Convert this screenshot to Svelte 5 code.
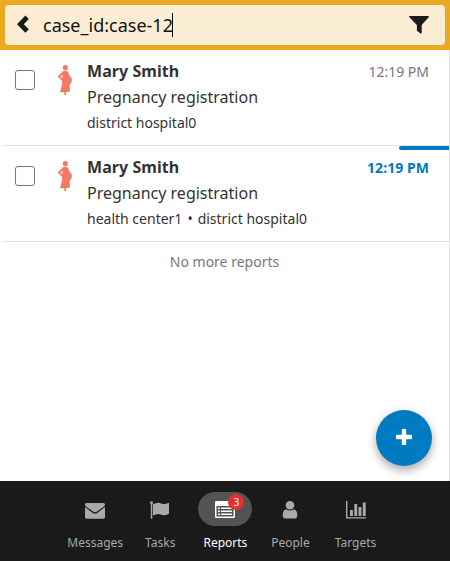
<script>
  const reports = [
    { name: 'Mary Smith', title: 'Pregnancy registration', lineage: ['district hospital0'], time: '12:19 PM', unread: false },
    { name: 'Mary Smith', title: 'Pregnancy registration', lineage: ['health center1', 'district hospital0'], time: '12:19 PM', unread: true }
  ];
  const tabs = [
    { id: 'messages', label: 'Messages' },
    { id: 'tasks', label: 'Tasks' },
    { id: 'reports', label: 'Reports', badge: 3 },
    { id: 'people', label: 'People' },
    { id: 'targets', label: 'Targets' }
  ];
  const active = 'reports';
</script>

<div class="app">
  <header>
    <div class="search">
      <svg class="back" width="12" height="19" viewBox="0 0 12 19"><path d="M0 9.200 8.400 .5 11.800 3.900 6.800 9.200l5 5.100-3.400 3.500z" fill="#1a1a1a" /></svg>
      <span class="query">case_id:case-12</span><i class="caret"></i>
      <svg class="filter" width="20" height="18" viewBox="0 0 20 18"><path d="M.8 0h18.400q1.100 0 .7 1.100L12.700 9v7.700q-.1 1.100-1.100.7L7.900 14.800V9L.1 1.100Q-.1 0 .8 0z" fill="#1a1a1a" /></svg>
    </div>
  </header>

  <main>
    {#each reports as report}
      <article class:unread={report.unread}>
        <span class="check"></span>
        <svg class="person" width="14" height="30" viewBox="0 0 14 30" fill="#f47b63">
          <circle cx="7.300" cy="2.700" r="2.600" />
          <path fill-rule="evenodd" d="M4.800 6.300Q7 5.400 9.300 6.300q1.300 1 1.800 3.700 2.800 2.300 2.800 5.600-.1 2.400-2.200 4.200L12 26q-1.400 1.200-4 1.200V30H6.300v-2.800H2Q3.100 22.500 4.300 18.800L3.900 15.600.5 12.500Q-.2 11.500.5 10.500zM4.400 9.700 2.300 11.600 4.300 13.500z" />
        </svg>
        <div class="content">
          <div class="heading"><h4>{report.name}</h4><time>{report.time}</time></div>
          <p class="title">{report.title}</p>
          <p class="lineage">
            {#each report.lineage as place, i}{#if i > 0}<b>•</b>{/if}<span>{place}</span>{/each}
          </p>
        </div>
      </article>
    {/each}
    <p class="end">No more reports</p>
    <button class="add" aria-label="Add">
      <svg width="16" height="16" viewBox="0 0 16 16"><path d="M6.700 0h2.600q.9 0 .9.900v4.900h4.900q.9 0 .9.900v2.600q0 .9-.9.900h-4.900v4.900q0 .9-.9.900H6.700q-.9 0-.9-.9v-4.900H.9Q0 10.200 0 9.300V6.700q0-.9.9-.9h4.900V.9q0-.9.9-.9z" fill="#fff" /></svg>
    </button>
  </main>

  <nav>
    {#each tabs as tab}
      <div class="tab" class:active={tab.id === active}>
        <span class="pill">
          <svg width="22" height="20" viewBox="0 0 22 20" fill="currentColor">
            {#if tab.id === 'messages'}
              <path d="M1 3.500Q1 2 2.500 2h17Q21 2 21 3.500q0 1-1 2L13 10.600q-2 1.400-4 0L2 5.500Q1 4.500 1 3.500zM1 6l7.500 5.700q2.500 1.800 5 0L21 6v10q0 1.700-1.700 1.700H2.700Q1 17.700 1 16z" />
            {:else if tab.id === 'tasks'}
              <circle cx="2.500" cy="1.700" r="1.500" /><path d="M1.800 2h1.500v15.800H1.800z" />
              <path d="M4 3.300Q9 .7 12.200 2.400q3 1.500 7.800-.700v11q-4.700 2.500-8 .900-3-1.600-8 .900z" />
            {:else if tab.id === 'reports'}
              <path fill-rule="evenodd" d="M2.300 0h17.400Q21 0 21 1.300v14.400q0 1.300-1.300 1.300H2.300Q1 17 1 15.700V1.300Q1 0 2.300 0zM2.500 5v10.500h17V5z" />
              <path d="M4 6.500h2V8H4zM7 6.500h11V8H7zM4 9.500h2V11H4zM7 9.500h11V11H7zM4 12.500h2V14H4zM7 12.500h11V14H7z" />
            {:else if tab.id === 'people'}
              <circle cx="11" cy="4.300" r="4.300" />
              <path d="M7 8.200q4 2.600 8 0 3.300.7 3.300 6.200 0 3.100-3 3.100H6.700q-3 0-3-3.100Q3.700 8.900 7 8.200z" />
            {:else}
              <path d="M1 0h1.400v16.200H21v1.400H1zM5 9h2.900v6H5zM9.300 3h2.900v12H9.300zM13.500 6h2.900v9h-2.900zM17.800 1.500h2.900V15h-2.900z" />
            {/if}
          </svg>
          {#if tab.badge}<em>{tab.badge}</em>{/if}
        </span>
        <span class="label">{tab.label}</span>
      </div>
    {/each}
  </nav>
</div>

<style>
  :global(body) { margin: 0; }
  .app { width: 450px; height: 561px; display: flex; flex-direction: column; font-family: 'Noto Sans', sans-serif; color: #333; background: #fff; overflow: hidden; }
  .app * { box-sizing: border-box; }
  header { height: 50px; padding: 5px; background: #e9aa22; flex: none; }
  .search { height: 40px; border-radius: 4px; background: #fbedd3; display: flex; align-items: center; padding: 0 16px 0 11.500px; }
  .back { margin-right: 14.500px; margin-top: -1px; }
  .query { font-size: 18px; line-height: 26px; color: #111; }
  .caret { width: 1px; height: 24px; background: #000; margin-left: -1px; }
  .filter { margin-left: auto; }
  main { flex: 1; position: relative; border-right: 1px solid #e0e0e0; }
  article { height: 96px; margin-left: 2px; border-bottom: 1px solid #e0e0e0; border-left: 1px solid transparent; display: flex; position: relative; }
  .check { width: 20px; height: 20px; border: 1px solid #767676; border-radius: 3px; margin: 20px 0 0 12px; }
  .person { margin: 15px 0 0 23px; }
  .content { flex: 1; margin: 8px 20px 0 15px; }
  .heading { display: flex; justify-content: space-between; }
  h4, p { margin: 0; }
  h4 { font-size: 16px; line-height: 26px; font-weight: 700; letter-spacing: .06px; }
  time { font-size: 14px; line-height: 28px; height: 26px; color: #777; }
  .title { font-size: 16px; line-height: 26px; }
  .lineage { font-size: 14px; line-height: 25px; }
  .lineage b { font-weight: 400; margin: 0 5px; }
  .unread time { color: #007ac0; font-weight: 700; letter-spacing: .06px; }
  .unread::after { content: ''; position: absolute; right: 0; top: 0; width: 50px; height: 4px; background: #007ac0; border-radius: 2px 0 0 2px; }
  .end { text-align: center; font-size: 14px; line-height: 24px; margin-top: 8px; color: #777; }
  .add { position: absolute; right: 17px; bottom: 15px; width: 56px; height: 56px; border: 0; border-radius: 50%; padding: 0; background: #007ac0; display: grid; place-items: center; box-shadow: 0 4px 10px rgba(0, 0, 0, .35); }
  .add svg { margin-top: -2px; }
  nav { height: 80px; flex: none; background: #1a1a1a; display: flex; justify-content: center; padding: 11px 0 0 .8px; color: #a7a9ac; }
  .tab { width: 65.100px; display: flex; flex-direction: column; align-items: center; }
  .pill { width: 54px; height: 34px; border-radius: 17px; display: grid; place-items: center; position: relative; }
  .pill svg { margin-top: 4px; }
  .active { color: #fff; }
  .active .pill { background: #535353; }
  em { position: absolute; left: 30px; top: 1.500px; width: 16px; height: 16px; border-radius: 50%; background: #e33030; color: #fff; font-style: normal; font-size: 10px; line-height: 16px; text-align: center; }
  .label { font-size: 12px; line-height: 18px; margin-top: 8px; }
</style>
